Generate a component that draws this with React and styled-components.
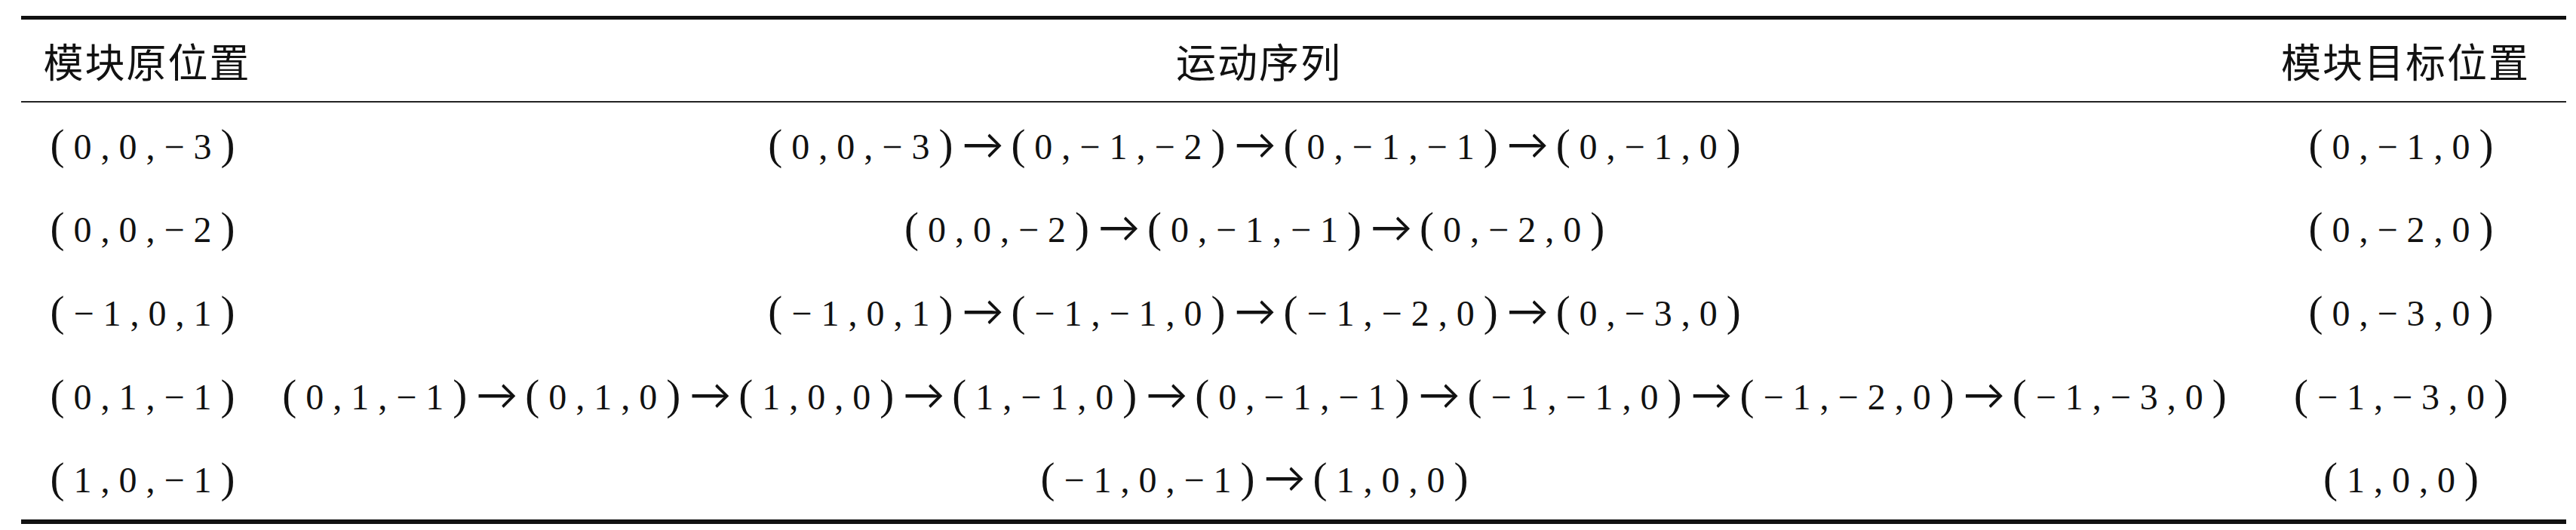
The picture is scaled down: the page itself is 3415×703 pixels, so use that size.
import styled, { createGlobalStyle } from 'styled-components'

const GlobalStyle = createGlobalStyle`
    body {
        margin: 0;
        background: #fff;
        color: #111;
        font-family: "Liberation Serif", "Noto Sans CJK SC", serif;
    }
`

const rows = [
    { from: "(0,0,−3)", seq: "(0,0,−3)→(0,−1,−2)→(0,−1,−1)→(0,−1,0)", to: "(0,−1,0)" },
    { from: "(0,0,−2)", seq: "(0,0,−2)→(0,−1,−1)→(0,−2,0)", to: "(0,−2,0)" },
    { from: "(−1,0,1)", seq: "(−1,0,1)→(−1,−1,0)→(−1,−2,0)→(0,−3,0)", to: "(0,−3,0)" },
    { from: "(0,1,−1)", seq: "(0,1,−1)→(0,1,0)→(1,0,0)→(1,−1,0)→(0,−1,−1)→(−1,−1,0)→(−1,−2,0)→(−1,−3,0)", to: "(−1,−3,0)" },
    { from: "(1,0,−1)", seq: "(−1,0,−1)→(1,0,0)", to: "(1,0,0)" },
]

const Page = styled.div`
    padding: 21px 0 0 28px;
`

const Table = styled.div`
    width: 3374px;
    border-top: 5px solid #111;
    border-bottom: 6px solid #111;
`

const Row = styled.div`
    display: grid;
    grid-template-columns: 334px 2614px 426px;
    align-items: center;
    height: ${(p) => p.$head ? '108px' : '110.6px'};
    border-bottom: ${(p) => p.$head ? '2px solid #222' : 'none'};
`

const HeadCell = styled.div`
    font-family: "Noto Sans CJK SC", sans-serif;
    font-size: 53px;
    letter-spacing: 2px;
    line-height: 1;
    text-align: center;
`

const Cell = styled.div`
    font-family: "Liberation Serif", "Times New Roman", serif;
    font-size: 48px;
    letter-spacing: 12px;
    line-height: 1;
    white-space: nowrap;
    text-align: center;
`

const Paren = styled.span`
    font-size: 57px;
`

const Arrow = styled.span`
    font-family: Lato, "DejaVu Serif", serif;
    font-size: 55px;
    letter-spacing: 0;
    margin-right: 10px;
`

// tall brackets and long arrows, like the printed table
const Coords = ({ text }) => (
    <>
        {text.split('').map((c, i) => {
            if (c === '(' || c === ')') return <Paren key={i}>{c}</Paren>
            if (c === '→') return <Arrow key={i}>{c}</Arrow>
            return c
        })}
    </>
)

const App = () => {
    return (
        <>
            <GlobalStyle />
            <Page>
                <Table>
                    <Row $head>
                        <HeadCell>模块原位置</HeadCell>
                        <HeadCell>运动序列</HeadCell>
                        <HeadCell>模块目标位置</HeadCell>
                    </Row>
                    {rows.map((r, i) => (
                        <Row key={i}>
                            <Cell><Coords text={r.from} /></Cell>
                            <Cell><Coords text={r.seq} /></Cell>
                            <Cell><Coords text={r.to} /></Cell>
                        </Row>
                    ))}
                </Table>
            </Page>
        </>
    )
}

export default App
